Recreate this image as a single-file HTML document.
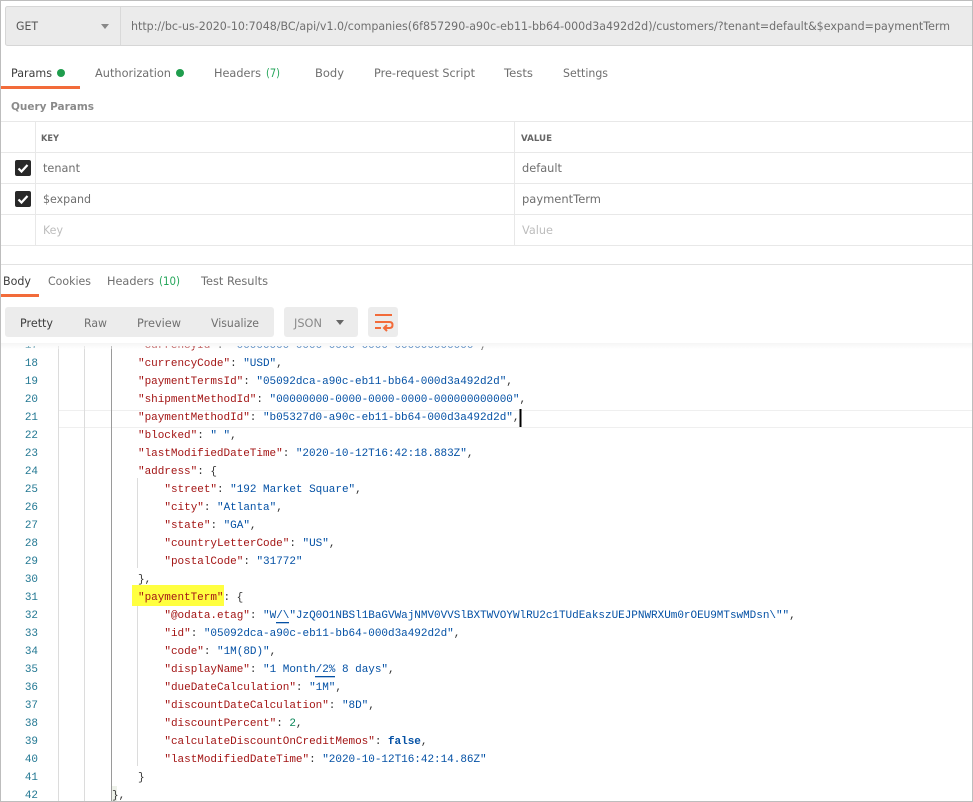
<!DOCTYPE html>
<html><head><meta charset="utf-8">
<style>
html,body{margin:0;padding:0;background:#fff;width:973px;height:802px;overflow:hidden}
svg{display:block}
.u{font-family:"DejaVu Sans",sans-serif;font-size:11.5px;fill:#6f6f6f}
.d{fill:#3d3d3d}
.g{fill:#26a65b}
.b{font-weight:bold;font-size:11px;fill:#8a8a8a}
.h{font-weight:bold;font-size:8.5px;fill:#666}
.p{fill:#bdbdbd}
.m{font-family:"Liberation Mono",monospace;font-size:11px;white-space:pre;letter-spacing:-.025px}
.n{fill:#237893;text-anchor:end}
.k{fill:#a31515}
.s{fill:#0451a5}
.t{fill:#333}
.v{fill:#098658}
.f{fill:#0451a5;font-weight:bold}
</style></head><body>
<svg width="973" height="802" viewBox="0 0 973 802" xmlns="http://www.w3.org/2000/svg">
<defs>
<clipPath id="ed"><rect x="0" y="346" width="973" height="456"/></clipPath>
<linearGradient id="sh" x1="0" y1="0" x2="0" y2="1"><stop offset="0" stop-color="#e6e6e6"/><stop offset="1" stop-color="#ffffff"/></linearGradient>
</defs>
<rect width="973" height="802" fill="#fff"/>

<!-- URL bar -->
<rect x="5.500" y="6.500" width="468" height="39" rx="2" fill="#ebebeb" stroke="#d6d6d6"/>
<rect x="120" y="6.500" width="853" height="39" fill="#ebebeb"/>
<path d="M120 6.500H973M120 45.500H973" stroke="#d6d6d6"/>
<rect x="120" y="7" width="1" height="38" fill="#d9d9d9"/>
<text class="u" x="16" y="30" style="fill:#555;font-size:11.5px" textLength="22" lengthAdjust="spacingAndGlyphs">GET</text>
<path d="M101 24h8l-4 5z" fill="#888"/>
<text class="u" x="131" y="30" textLength="819" lengthAdjust="spacingAndGlyphs">http://bc-us-2020-10:7048/BC/api/v1.0/companies(6f857290-a90c-eb11-bb64-000d3a492d2d)/customers/?tenant=default&amp;$expand=paymentTerm</text>

<!-- Tabs -->
<text class="u d" x="11" y="77" textLength="41" lengthAdjust="spacingAndGlyphs">Params</text>
<circle cx="61" cy="73" r="4" fill="#1f9d4d"/>
<text class="u" x="95" y="77" textLength="76" lengthAdjust="spacingAndGlyphs">Authorization</text>
<circle cx="180" cy="73" r="4" fill="#1f9d4d"/>
<text class="u" x="214" y="77" textLength="47" lengthAdjust="spacingAndGlyphs">Headers</text>
<text class="u g" x="266" y="77" textLength="14" lengthAdjust="spacingAndGlyphs">(7)</text>
<text class="u" x="315" y="77" textLength="29" lengthAdjust="spacingAndGlyphs">Body</text>
<text class="u" x="374" y="77" textLength="101" lengthAdjust="spacingAndGlyphs">Pre-request Script</text>
<text class="u" x="504" y="77" textLength="29" lengthAdjust="spacingAndGlyphs">Tests</text>
<text class="u" x="563" y="77" textLength="45" lengthAdjust="spacingAndGlyphs">Settings</text>
<rect x="1" y="86" width="79" height="3" fill="#f26b3a"/>

<text class="u b" x="11" y="110" textLength="83" lengthAdjust="spacingAndGlyphs">Query Params</text>

<!-- Params table -->
<path d="M1 121.500H973M1 152.500H973M1 183.500H973M1 214.500H973M1 245.500H973M35.500 121V246M514.500 121V246" stroke="#e8e8e8" fill="none"/>
<text class="u h" x="41" y="141" textLength="18" lengthAdjust="spacingAndGlyphs">KEY</text>
<text class="u h" x="521" y="141" textLength="31" lengthAdjust="spacingAndGlyphs">VALUE</text>
<rect x="15" y="160" width="16" height="16" rx="2" fill="#282828"/>
<path d="M18.500 168.500l3 3 6-6.500" stroke="#fff" stroke-width="2.200" fill="none"/>
<rect x="15" y="191" width="16" height="16" rx="2" fill="#282828"/>
<path d="M18.500 199.500l3 3 6-6.500" stroke="#fff" stroke-width="2.200" fill="none"/>
<text class="u" x="43" y="172" textLength="37" lengthAdjust="spacingAndGlyphs">tenant</text>
<text class="u" x="43" y="203" textLength="48" lengthAdjust="spacingAndGlyphs">$expand</text>
<text class="u p" x="43" y="234" textLength="20" lengthAdjust="spacingAndGlyphs">Key</text>
<text class="u" x="522" y="172" textLength="40" lengthAdjust="spacingAndGlyphs">default</text>
<text class="u" x="522" y="203" textLength="79" lengthAdjust="spacingAndGlyphs">paymentTerm</text>
<text class="u p" x="522" y="234" textLength="31" lengthAdjust="spacingAndGlyphs">Value</text>

<!-- Response -->
<rect x="1" y="264" width="972" height="1" fill="#e2e2e2"/>
<text class="u d" x="3" y="285" textLength="28" lengthAdjust="spacingAndGlyphs">Body</text>
<text class="u" x="48" y="285" textLength="43" lengthAdjust="spacingAndGlyphs">Cookies</text>
<text class="u" x="107" y="285" textLength="47" lengthAdjust="spacingAndGlyphs">Headers</text>
<text class="u g" x="159" y="285" textLength="21" lengthAdjust="spacingAndGlyphs">(10)</text>
<text class="u" x="201" y="285" textLength="67" lengthAdjust="spacingAndGlyphs">Test Results</text>
<rect x="1" y="294" width="38" height="3" fill="#f26b3a"/>

<rect x="5" y="307" width="269" height="30" rx="3" fill="#ececec"/>
<text class="u d" x="20" y="327" textLength="33" lengthAdjust="spacingAndGlyphs">Pretty</text>
<text class="u" x="84" y="327" textLength="23" lengthAdjust="spacingAndGlyphs">Raw</text>
<text class="u" x="137" y="327" textLength="44" lengthAdjust="spacingAndGlyphs">Preview</text>
<text class="u" x="211" y="327" textLength="48" lengthAdjust="spacingAndGlyphs">Visualize</text>
<rect x="284" y="307" width="74" height="30" rx="3" fill="#ececec"/>
<text class="u" x="294" y="327" textLength="28" lengthAdjust="spacingAndGlyphs" style="fill:#8a8a8a">JSON</text>
<path d="M336 320h8l-4 5z" fill="#666"/>
<rect x="368" y="307" width="30" height="30" rx="3" fill="#ececec"/>
<path d="M375 315H392M375 322H389.500Q392.500 322 392.500 325Q392.500 328 389.500 328H384M387 325L384 328L387 331M375 328H381" stroke="#f26b3a" stroke-width="2" fill="none"/>

<!-- Editor -->
<g clip-path="url(#ed)">
<rect x="59" y="410" width="914" height="18" fill="#fff"/>
<path d="M59 410.500H973M59 427.500H973" stroke="#efefef"/>
<path d="M58.500 345V802M84.500 345V802" stroke="#dcdcdc"/>
<path d="M111.500 345V802" stroke="#9a9a9a"/>
<path d="M137.500 478V568M137.500 604V766" stroke="#dcdcdc"/>
<rect x="132" y="585" width="92" height="21" fill="#ffff40"/>
<rect x="112" y="786" width="5" height="15" fill="#eef2ea"/>
<rect x="276" y="622" width="13" height="1.300" fill="#0451a5"/>
<rect x="315" y="676" width="20" height="1.300" fill="#0451a5"/>
<rect x="519.500" y="409" width="2" height="18" fill="#000"/>

<g class="m">
<text class="m n" x="38" y="348">17</text><text class="m n" x="38" y="366">18</text><text class="m n" x="38" y="384">19</text><text class="m n" x="38" y="402">20</text><text class="m n" x="38" y="420">21</text><text class="m n" x="38" y="438">22</text><text class="m n" x="38" y="456">23</text><text class="m n" x="38" y="474">24</text><text class="m n" x="38" y="492">25</text><text class="m n" x="38" y="510">26</text><text class="m n" x="38" y="528">27</text><text class="m n" x="38" y="546">28</text><text class="m n" x="38" y="564">29</text><text class="m n" x="38" y="582">30</text><text class="m n" x="38" y="600">31</text><text class="m n" x="38" y="618">32</text><text class="m n" x="38" y="636">33</text><text class="m n" x="38" y="654">34</text><text class="m n" x="38" y="672">35</text><text class="m n" x="38" y="690">36</text><text class="m n" x="38" y="708">37</text><text class="m n" x="38" y="726">38</text><text class="m n" x="38" y="744">39</text><text class="m n" x="38" y="762">40</text><text class="m n" x="38" y="780">41</text><text class="m n" x="38" y="798">42</text>

<text class="m t" x="138" y="348" xml:space="preserve"><tspan class="k">"currencyId"</tspan>: <tspan class="s">"00000000-0000-0000-0000-000000000000"</tspan>,</text>
<text class="m t" x="138" y="366" xml:space="preserve"><tspan class="k">"currencyCode"</tspan>: <tspan class="s">"USD"</tspan>,</text>
<text class="m t" x="138" y="384" xml:space="preserve"><tspan class="k">"paymentTermsId"</tspan>: <tspan class="s">"05092dca-a90c-eb11-bb64-000d3a492d2d"</tspan>,</text>
<text class="m t" x="138" y="402" xml:space="preserve"><tspan class="k">"shipmentMethodId"</tspan>: <tspan class="s">"00000000-0000-0000-0000-000000000000"</tspan>,</text>
<text class="m t" x="138" y="420" xml:space="preserve"><tspan class="k">"paymentMethodId"</tspan>: <tspan class="s">"b05327d0-a90c-eb11-bb64-000d3a492d2d"</tspan>,</text>
<text class="m t" x="138" y="438" xml:space="preserve"><tspan class="k">"blocked"</tspan>: <tspan class="s">" "</tspan>,</text>
<text class="m t" x="138" y="456" xml:space="preserve"><tspan class="k">"lastModifiedDateTime"</tspan>: <tspan class="s">"2020-10-12T16:42:18.883Z"</tspan>,</text>
<text class="m t" x="138" y="474" xml:space="preserve"><tspan class="k">"address"</tspan>: {</text>
<text class="m t" x="164.400" y="492" xml:space="preserve"><tspan class="k">"street"</tspan>: <tspan class="s">"192 Market Square"</tspan>,</text>
<text class="m t" x="164.400" y="510" xml:space="preserve"><tspan class="k">"city"</tspan>: <tspan class="s">"Atlanta"</tspan>,</text>
<text class="m t" x="164.400" y="528" xml:space="preserve"><tspan class="k">"state"</tspan>: <tspan class="s">"GA"</tspan>,</text>
<text class="m t" x="164.400" y="546" xml:space="preserve"><tspan class="k">"countryLetterCode"</tspan>: <tspan class="s">"US"</tspan>,</text>
<text class="m t" x="164.400" y="564" xml:space="preserve"><tspan class="k">"postalCode"</tspan>: <tspan class="s">"31772"</tspan></text>
<text class="m t" x="138" y="582">},</text>
<text class="m t" x="138" y="600" xml:space="preserve"><tspan class="k">"paymentTerm"</tspan>: {</text>
<text class="m t" x="164.400" y="618" xml:space="preserve"><tspan class="k">"@odata.etag"</tspan>: <tspan class="s">"W/\"JzQ0O1NBSl1BaGVWajNMV0VVSlBXTWVOYWlRU2c1TUdEakszUEJPNWRXUm0rOEU9MTswMDsn\""</tspan>,</text>
<text class="m t" x="164.400" y="636" xml:space="preserve"><tspan class="k">"id"</tspan>: <tspan class="s">"05092dca-a90c-eb11-bb64-000d3a492d2d"</tspan>,</text>
<text class="m t" x="164.400" y="654" xml:space="preserve"><tspan class="k">"code"</tspan>: <tspan class="s">"1M(8D)"</tspan>,</text>
<text class="m t" x="164.400" y="672" xml:space="preserve"><tspan class="k">"displayName"</tspan>: <tspan class="s">"1 Month/2% 8 days"</tspan>,</text>
<text class="m t" x="164.400" y="690" xml:space="preserve"><tspan class="k">"dueDateCalculation"</tspan>: <tspan class="s">"1M"</tspan>,</text>
<text class="m t" x="164.400" y="708" xml:space="preserve"><tspan class="k">"discountDateCalculation"</tspan>: <tspan class="s">"8D"</tspan>,</text>
<text class="m t" x="164.400" y="726" xml:space="preserve"><tspan class="k">"discountPercent"</tspan>: <tspan class="v">2</tspan>,</text>
<text class="m t" x="164.400" y="744" xml:space="preserve"><tspan class="k">"calculateDiscountOnCreditMemos"</tspan>: <tspan class="f">false</tspan>,</text>
<text class="m t" x="164.400" y="762" xml:space="preserve"><tspan class="k">"lastModifiedDateTime"</tspan>: <tspan class="s">"2020-10-12T16:42:14.86Z"</tspan></text>
<text class="m t" x="138" y="780">}</text>
<text class="m t" x="112" y="798">},</text>
</g>
</g>
<!-- Shadow beneath toolbar -->
<rect x="1" y="343" width="972" height="6" fill="url(#sh)" opacity=".4"/>

<!-- Screenshot frame -->
<path d="M0 .5H973M.5 0V802M0 801.500H973M972.500 0V802" stroke="#bdbdbd" fill="none"/>
</svg>
</body></html>
